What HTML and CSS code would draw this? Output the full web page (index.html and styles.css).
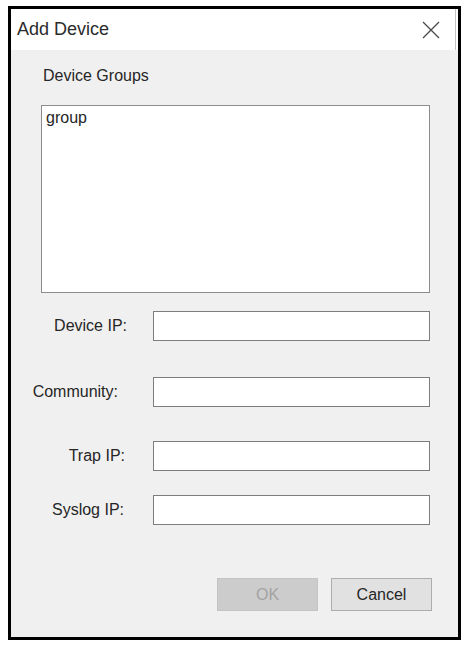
FILE: index.html
```
<!DOCTYPE html>
<html>
<head>
<meta charset="utf-8">
<link rel="stylesheet" href="styles.css">
</head>
<body>
<div class="dialog">
  <div class="titlebar">
    <span class="title">Add Device</span>
    <svg class="close" width="18" height="18" viewBox="0 0 18 18"><path d="M1 1 L17 17 M17 1 L1 17" stroke="#4a4a4a" stroke-width="1.3" fill="none"/></svg>
  </div>
  <div class="content">
    <div class="group-label">Device Groups</div>
    <div class="listbox"><div class="list-item">group</div></div>
    <div class="form">
      <div class="field field--first"><label class="label">Device IP:</label><div class="input"></div></div>
      <div class="field field--community"><label class="label label--community">Community:</label><div class="input"></div></div>
      <div class="field field--trap"><label class="label label--trap">Trap IP:</label><div class="input"></div></div>
      <div class="field field--syslog"><label class="label label--syslog">Syslog IP:</label><div class="input"></div></div>
    </div>
    <div class="actions">
      <div class="btn btn--disabled">OK</div>
      <div class="btn">Cancel</div>
    </div>
  </div>
</div>
</body>
</html>
```

FILE: styles.css
```
html, body {
  margin: 0;
  padding: 0;
  background: #ffffff;
}
body {
  padding: 6px 0 0 8px;
  font-family: "Liberation Sans", Arial, sans-serif;
  color: #222;
}
.dialog {
  width: 447px;
  height: 628px;
  border: 3px solid #000;
  background: #f0f0f0;
  display: flex;
  flex-direction: column;
}
.titlebar {
  height: 41px;
  background: #fff;
  display: flex;
  align-items: center;
  justify-content: space-between;
  padding: 0 18px 0 6px;
  flex: none;
  box-shadow: inset -2px 0 0 #fff, inset -3px 0 0 #c4c4c4;
}
.title {
  font-size: 18px;
  color: #2b2b2b;
}
.close {
  display: block;
}
.content {
  padding: 17px 28px 0 30px;
  display: flex;
  flex-direction: column;
}
.group-label {
  font-size: 16px;
  line-height: 18px;
  padding-left: 2px;
  color: #262626;
}
.listbox {
  margin-top: 20px;
  border: 1px solid #8c8c8c;
  background: #fff;
  padding: 3px 4px;
  box-sizing: content-box;
  height: 180px;
}
.list-item {
  font-size: 16px;
  line-height: 18px;
  color: #262626;
}
.form {
  margin-left: -30px;
  margin-top: 18px;
  display: flex;
  flex-direction: column;
}
.field {
  display: flex;
  align-items: center;
  height: 30px;
}
.field--community { margin-top: 36px; }
.field--trap { margin-top: 34px; }
.field--syslog { margin-top: 24px; }
.label {
  width: 142px;
  box-sizing: border-box;
  text-align: right;
  padding-right: 26px;
  font-size: 16px;
  color: #262626;
  flex: none;
}
.label--community { padding-right: 35px; }
.label--trap { padding-right: 28px; }
.label--syslog { padding-right: 29px; }
.input {
  flex: 1;
  height: 30px;
  box-sizing: border-box;
  border: 1px solid #7d7d7d;
  background: #fff;
}
.actions {
  margin-top: 53px;
  margin-right: -2px;
  display: flex;
  justify-content: flex-end;
  gap: 13px;
}
.btn {
  width: 101px;
  height: 33px;
  box-sizing: border-box;
  border: 1px solid #adadad;
  background: #e1e1e1;
  display: flex;
  align-items: center;
  justify-content: center;
  font-size: 16px;
  color: #262626;
}
.btn--disabled {
  background: #cccccc;
  border-color: #c4c4c4;
  color: #a3a3a3;
}
```
